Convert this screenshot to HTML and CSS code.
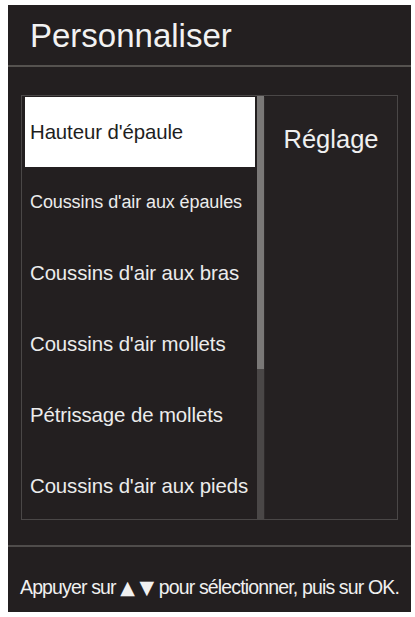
FILE: index.html
```html
<!DOCTYPE html>
<html lang="fr">
<head>
<meta charset="utf-8">
<title>Personnaliser</title>
<link rel="stylesheet" href="styles.css">
</head>
<body>
<div class="panel">
  <header class="header">
    <h1 class="title">Personnaliser</h1>
  </header>
  <main class="content">
    <div class="box">
      <ul class="list">
        <li class="item selected">Hauteur d'épaule</li>
        <li class="item small">Coussins d'air aux épaules</li>
        <li class="item">Coussins d'air aux bras</li>
        <li class="item">Coussins d'air mollets</li>
        <li class="item">Pétrissage de mollets</li>
        <li class="item">Coussins d'air aux pieds</li>
      </ul>
      <div class="scrollbar"><div class="thumb"></div></div>
      <div class="side">
        <div class="side-label">Réglage</div>
      </div>
    </div>
  </main>
  <footer class="footer">
    <p class="hint">Appuyer sur <span class="arrows">▲</span> <span class="arrows">▼</span> pour sélectionner, puis sur OK.</p>
  </footer>
</div>
</body>
</html>
```

FILE: styles.css
```css
html, body {
  margin: 0;
  padding: 0;
  background: #ffffff;
}

body {
  font-family: "Liberation Sans", Arial, sans-serif;
}

.panel {
  margin: 5px 4px 0 8px;
  width: 403px;
  height: 607px;
  background: #231f20;
  display: flex;
  flex-direction: column;
}

.header {
  border-bottom: 2px solid #55524f;
  box-sizing: border-box;
  height: 62px;
  display: flex;
  align-items: flex-start;
}

.title {
  margin: 0;
  padding: 13px 0 0 22px;
  font-size: 33px;
  font-weight: normal;
  color: #f2f2f2;
  line-height: 36px;
}

.content {
  height: 480px;
  box-sizing: border-box;
  padding: 28px 13px 0 13px;
  border-bottom: 2px solid #4f4c4b;
}

.box {
  display: flex;
  height: 425px;
  box-sizing: border-box;
  border: 1px solid #4a4747;
  padding: 1px 0 0 3px;
  overflow: hidden;
}

.list {
  list-style: none;
  margin: 0;
  padding: 0;
  width: 230px;
  flex: none;
}

.item {
  height: 71px;
  display: flex;
  align-items: center;
  padding-left: 5px;
  font-size: 20.4px;
  color: #ececec;
  letter-spacing: -0.1px;
  white-space: nowrap;
}

.item.small {
  font-size: 18px;
}

.item.selected {
  background: #ffffff;
  color: #1e1e1e;
  height: 70px;
}

.scrollbar {
  width: 7px;
  margin-left: 2px;
  margin-top: -1px;
  background: #4a4747;
  flex: none;
  display: flex;
  flex-direction: column;
}

.thumb {
  height: 273px;
  background: #7a7877;
}

.side {
  flex: 1;
  background: #252122;
  border-left: 1px solid #2e2a2b;
  display: flex;
  justify-content: center;
}

.side-label {
  margin-top: 27px;
  font-size: 25.5px;
  color: #f0f0f0;
  line-height: 30px;
  height: 30px;
}

.footer {
  flex: 1;
  display: flex;
  justify-content: center;
}

.hint {
  margin: 29px 0 0 0;
  font-size: 19.5px;
  letter-spacing: -0.85px;
  color: #f0f0f0;
  white-space: nowrap;
  line-height: 22px;
}

.arrows {
  font-family: "DejaVu Sans", sans-serif;
  font-size: 19px;
  letter-spacing: 0;
}
```
